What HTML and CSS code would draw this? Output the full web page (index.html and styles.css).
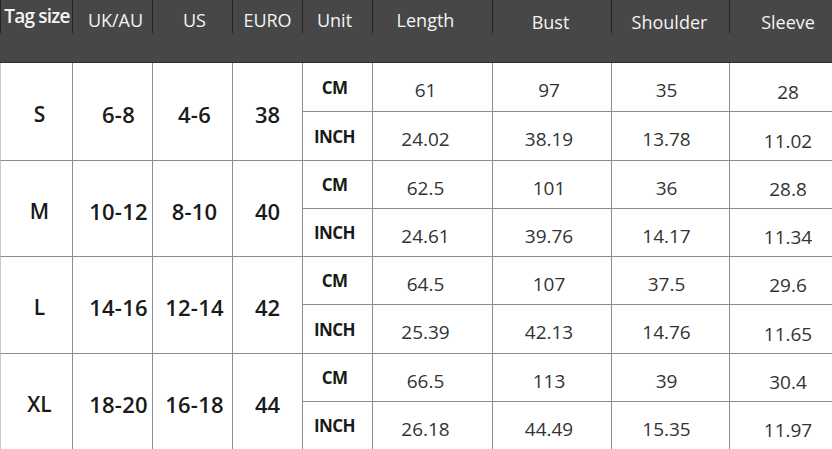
FILE: index.html
```html
<!DOCTYPE html>
<html lang="en">
<head>
<meta charset="utf-8">
<title>Size chart</title>
<link rel="stylesheet" href="styles.css">
</head>
<body>
<div class="chart">
  <div class="head">
    <div class="head-labels">
      <div class="hl hl-tag">Tag size</div>
      <div class="hl hl-uk">UK/AU</div>
      <div class="hl hl-us">US</div>
      <div class="hl">EURO</div>
      <div class="hl hl-unit">Unit</div>
      <div class="hl hl-len">Length</div>
      <div class="hl hl-low hl-bust">Bust</div>
      <div class="hl hl-low hl-sh">Shoulder</div>
      <div class="hl hl-low hl-sl">Sleeve</div>
    </div>
    <div class="head-band"></div>
  </div>
  <div class="grid">
    <div class="c sz tag r1">S</div><div class="c sz uk r1">6-8</div><div class="c sz us r1">4-6</div><div class="c sz eu r1">38</div>
    <div class="c unit r1">CM</div><div class="c n len r1">61</div><div class="c n bust r1">97</div><div class="c n sh r1">35</div><div class="c n sl r1">28</div>
    <div class="c unit r2">INCH</div><div class="c n len r2">24.02</div><div class="c n bust r2">38.19</div><div class="c n sh r2">13.78</div><div class="c n sl r2">11.02</div>

    <div class="c sz tag">M</div><div class="c sz uk">10-12</div><div class="c sz us">8-10</div><div class="c sz eu">40</div>
    <div class="c unit">CM</div><div class="c n len">62.5</div><div class="c n bust">101</div><div class="c n sh">36</div><div class="c n sl">28.8</div>
    <div class="c unit">INCH</div><div class="c n len">24.61</div><div class="c n bust">39.76</div><div class="c n sh">14.17</div><div class="c n sl">11.34</div>

    <div class="c sz tag">L</div><div class="c sz uk">14-16</div><div class="c sz us">12-14</div><div class="c sz eu">42</div>
    <div class="c unit">CM</div><div class="c n len">64.5</div><div class="c n bust">107</div><div class="c n sh">37.5</div><div class="c n sl">29.6</div>
    <div class="c unit">INCH</div><div class="c n len">25.39</div><div class="c n bust">42.13</div><div class="c n sh">14.76</div><div class="c n sl">11.65</div>

    <div class="c sz tag last">XL</div><div class="c sz uk last">18-20</div><div class="c sz us last">16-18</div><div class="c sz eu last">44</div>
    <div class="c unit">CM</div><div class="c n len">66.5</div><div class="c n bust">113</div><div class="c n sh">39</div><div class="c n sl">30.4</div>
    <div class="c unit last">INCH</div><div class="c n len last">26.18</div><div class="c n bust last">44.49</div><div class="c n sh last">15.35</div><div class="c n sl last">11.97</div>
  </div>
</div>
</body>
</html>
```

FILE: styles.css
```css
* { box-sizing: border-box; }
html, body { margin: 0; padding: 0; background: #fff; }
body { width: 832px; height: 449px; overflow: hidden; font-family: "Open Sans", "Liberation Sans", sans-serif; }

.chart { width: 832px; }

.head { background: #474747; height: 63px; border-bottom: 1px solid #2e2e2e; }
.head-labels {
  display: grid;
  grid-template-columns: 72px 80px 80px 70px 70px 120px 119px 118px 103px;
  height: 33px;
}
.hl {
  border-left: 1px solid #242424;
  color: #f4f4f4;
  font-size: 18px;
  font-weight: 500;
  line-height: 18px;
  text-align: center;
  padding-top: 11px;
  white-space: nowrap;
}
.hl-tag { font-weight: 600; font-size: 19px; letter-spacing: -0.8px; padding-top: 7px; padding-left: 1px; }
.hl-uk { padding-left: 6px; }
.hl-us { padding-left: 4px; }
.hl-unit { padding-right: 6px; }
.hl-len { padding-right: 14px; }
.hl-low { padding-top: 13px; }
.hl-bust { padding-right: 3px; }
.hl-sh { padding-right: 2px; }
.hl-sl { padding-left: 14px; }

.grid {
  display: grid;
  grid-template-columns: 72px 80px 80px 70px 70px 120px 119px 118px 103px;
  grid-template-rows: 49px 49px 48px 48px 48px 49px 48px 47px;
}
.c {
  border-left: 1px solid #8c8c8c;
  border-bottom: 1px solid #8c8c8c;
  display: flex;
  align-items: center;
  justify-content: center;
  white-space: nowrap;
}
.c.last { border-bottom: none; }
.tag { border-left-color: #c8c8c8; }

.sz {
  grid-row: span 2;
  font-weight: 600;
  font-size: 22px;
  color: #1a1a1a;
  padding-top: 4px;
}
.tag { padding-left: 6px; font-size: 21px; }
.uk { padding-left: 12px; letter-spacing: 0.2px; }
.us { padding-left: 4px; letter-spacing: 0.2px; }

.unit {
  font-weight: 700;
  font-size: 17px;
  letter-spacing: -0.6px;
  color: #1a1a1a;
  padding-right: 6px;
}

.n {
  font-size: 19px;
  color: #333;
  padding-top: 6px;
  letter-spacing: 0;
}
.len { padding-right: 14px; }
.bust { padding-right: 6px; }
.sh { padding-right: 8px; }
.sl { padding-left: 14px; padding-top: 9px; }
```
